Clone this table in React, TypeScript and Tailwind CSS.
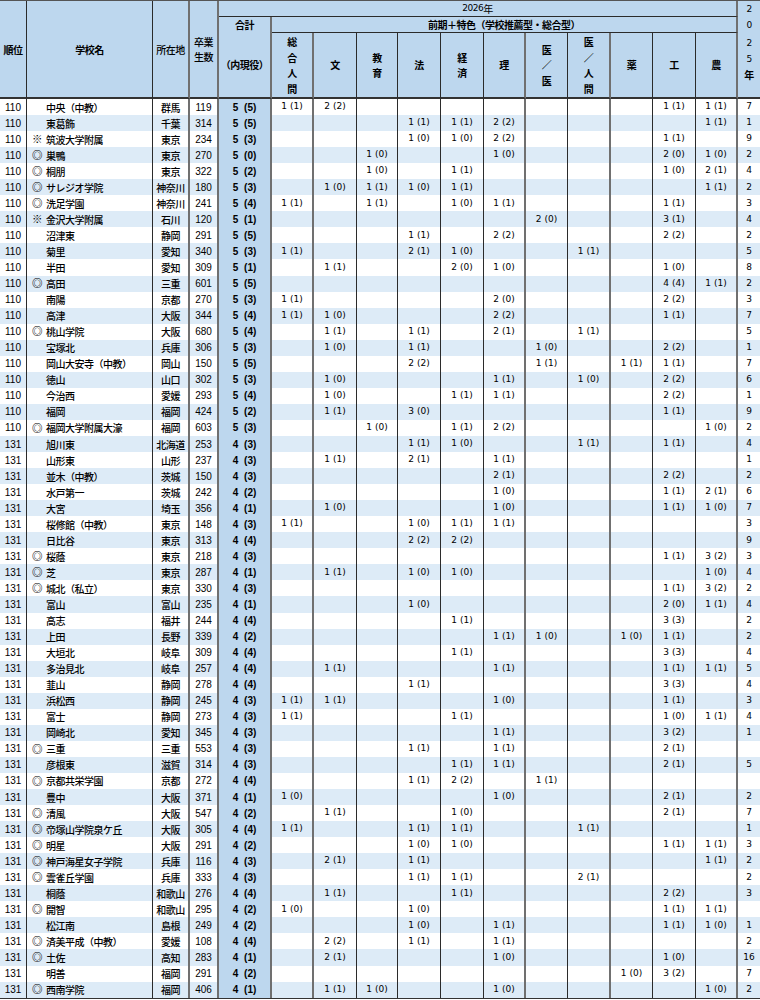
import React from 'react';

// column template shared by header and body rows
const COLS =
  'grid grid-cols-[27px_126px_37px_29px_53px_42px_43px_41px_43px_43px_42px_42px_43px_42px_43px_42px_22px]';

const THIN = 'border-r border-r-[#2b2b2b]';
const THICK = 'border-r-2 border-r-[#707070]';

// right border per column (17 columns)
const RB = [THIN, THIN, THICK, THICK, THICK, THICK, THIN, THIN, THIN, THIN, THICK, THIN, THICK, THIN, THIN, THICK, ''];

const KEYS = ['総', '文', '教', '法', '経', '理', '医', '人', '薬', '工', '農'];

const SUBJECTS: string[][] = [
  ['総', '合', '人', '間'],
  ['文'],
  ['教', '育'],
  ['法'],
  ['経', '済'],
  ['理'],
  ['医', '／', '医'],
  ['医', '／', '人', '間'],
  ['薬'],
  ['工'],
  ['農'],
];

// rank, mark, school, prefecture, graduates, total, per-faculty, 2025
type Row = [string, string, string, string, string, string, string, string];

const rows: Row[] = [
  ['110', '', '中央（中教）', '群馬', '119', '5(5)', '総:1(1) 文:2(2) 工:1(1) 農:1(1)', '7'],
  ['110', '', '東葛飾', '千葉', '314', '5(5)', '法:1(1) 経:1(1) 理:2(2) 農:1(1)', '1'],
  ['110', '※', '筑波大学附属', '東京', '234', '5(3)', '法:1(0) 経:1(0) 理:2(2) 工:1(1)', '9'],
  ['110', '◎', '巣鴨', '東京', '270', '5(0)', '教:1(0) 理:1(0) 工:2(0) 農:1(0)', '2'],
  ['110', '◎', '桐朋', '東京', '322', '5(2)', '教:1(0) 経:1(1) 工:1(0) 農:2(1)', '4'],
  ['110', '◎', 'サレジオ学院', '神奈川', '180', '5(3)', '文:1(0) 教:1(1) 法:1(0) 経:1(1) 農:1(1)', '2'],
  ['110', '◎', '洗足学園', '神奈川', '241', '5(4)', '総:1(1) 教:1(1) 経:1(0) 理:1(1) 工:1(1)', '3'],
  ['110', '※', '金沢大学附属', '石川', '120', '5(1)', '医:2(0) 工:3(1)', '4'],
  ['110', '', '沼津東', '静岡', '291', '5(5)', '法:1(1) 理:2(2) 工:2(2)', '2'],
  ['110', '', '菊里', '愛知', '340', '5(3)', '総:1(1) 法:2(1) 経:1(0) 人:1(1)', '5'],
  ['110', '', '半田', '愛知', '309', '5(1)', '文:1(1) 経:2(0) 理:1(0) 工:1(0)', '8'],
  ['110', '◎', '高田', '三重', '601', '5(5)', '工:4(4) 農:1(1)', '2'],
  ['110', '', '南陽', '京都', '270', '5(3)', '総:1(1) 理:2(0) 工:2(2)', '3'],
  ['110', '', '高津', '大阪', '344', '5(4)', '総:1(1) 文:1(0) 理:2(2) 工:1(1)', '7'],
  ['110', '◎', '桃山学院', '大阪', '680', '5(4)', '文:1(1) 法:1(1) 理:2(1) 人:1(1)', '5'],
  ['110', '', '宝塚北', '兵庫', '306', '5(3)', '文:1(0) 法:1(1) 医:1(0) 工:2(2)', '1'],
  ['110', '', '岡山大安寺（中教）', '岡山', '150', '5(5)', '法:2(2) 医:1(1) 薬:1(1) 工:1(1)', '7'],
  ['110', '', '徳山', '山口', '302', '5(3)', '文:1(0) 理:1(1) 人:1(0) 工:2(2)', '6'],
  ['110', '', '今治西', '愛媛', '293', '5(4)', '文:1(0) 経:1(1) 理:1(1) 工:2(2)', '1'],
  ['110', '', '福岡', '福岡', '424', '5(2)', '文:1(1) 法:3(0) 工:1(1)', '9'],
  ['110', '◎', '福岡大学附属大濠', '福岡', '603', '5(3)', '教:1(0) 経:1(1) 理:2(2) 農:1(0)', '2'],
  ['131', '', '旭川東', '北海道', '253', '4(3)', '法:1(1) 経:1(0) 人:1(1) 工:1(1)', '4'],
  ['131', '', '山形東', '山形', '237', '4(3)', '文:1(1) 法:2(1) 理:1(1)', '1'],
  ['131', '', '並木（中教）', '茨城', '150', '4(3)', '理:2(1) 工:2(2)', '2'],
  ['131', '', '水戸第一', '茨城', '242', '4(2)', '理:1(0) 工:1(1) 農:2(1)', '6'],
  ['131', '', '大宮', '埼玉', '356', '4(1)', '文:1(0) 理:1(0) 工:1(1) 農:1(0)', '7'],
  ['131', '', '桜修館（中教）', '東京', '148', '4(3)', '総:1(1) 法:1(0) 経:1(1) 理:1(1)', '3'],
  ['131', '', '日比谷', '東京', '313', '4(4)', '法:2(2) 経:2(2)', '9'],
  ['131', '◎', '桜蔭', '東京', '218', '4(3)', '工:1(1) 農:3(2)', '3'],
  ['131', '◎', '芝', '東京', '287', '4(1)', '文:1(1) 法:1(0) 経:1(0) 農:1(0)', '4'],
  ['131', '◎', '城北（私立）', '東京', '330', '4(3)', '工:1(1) 農:3(2)', '2'],
  ['131', '', '富山', '富山', '235', '4(1)', '法:1(0) 工:2(0) 農:1(1)', '4'],
  ['131', '', '高志', '福井', '244', '4(4)', '経:1(1) 工:3(3)', '2'],
  ['131', '', '上田', '長野', '339', '4(2)', '理:1(1) 医:1(0) 薬:1(0) 工:1(1)', '2'],
  ['131', '', '大垣北', '岐阜', '309', '4(4)', '経:1(1) 工:3(3)', '4'],
  ['131', '', '多治見北', '岐阜', '257', '4(4)', '文:1(1) 理:1(1) 工:1(1) 農:1(1)', '5'],
  ['131', '', '韮山', '静岡', '278', '4(4)', '法:1(1) 工:3(3)', '4'],
  ['131', '', '浜松西', '静岡', '245', '4(3)', '総:1(1) 文:1(1) 理:1(0) 工:1(1)', '3'],
  ['131', '', '富士', '静岡', '273', '4(3)', '総:1(1) 経:1(1) 工:1(0) 農:1(1)', '4'],
  ['131', '', '岡崎北', '愛知', '345', '4(3)', '理:1(1) 工:3(2)', '1'],
  ['131', '◎', '三重', '三重', '553', '4(3)', '法:1(1) 理:1(1) 工:2(1)', ''],
  ['131', '', '彦根東', '滋賀', '314', '4(3)', '経:1(1) 理:1(1) 工:2(1)', '5'],
  ['131', '◎', '京都共栄学園', '京都', '272', '4(4)', '法:1(1) 経:2(2) 医:1(1)', ''],
  ['131', '', '豊中', '大阪', '371', '4(1)', '総:1(0) 理:1(0) 工:2(1)', '2'],
  ['131', '◎', '清風', '大阪', '547', '4(2)', '文:1(1) 経:1(0) 工:2(1)', '7'],
  ['131', '◎', '帝塚山学院泉ケ丘', '大阪', '305', '4(4)', '総:1(1) 法:1(1) 経:1(1) 人:1(1)', '1'],
  ['131', '◎', '明星', '大阪', '291', '4(2)', '法:1(0) 経:1(0) 工:1(1) 農:1(1)', '3'],
  ['131', '◎', '神戸海星女子学院', '兵庫', '116', '4(3)', '文:2(1) 法:1(1) 農:1(1)', '2'],
  ['131', '◎', '雲雀丘学園', '兵庫', '333', '4(3)', '法:1(1) 経:1(1) 人:2(1)', '2'],
  ['131', '', '桐蔭', '和歌山', '276', '4(4)', '文:1(1) 経:1(1) 工:2(2)', '3'],
  ['131', '◎', '開智', '和歌山', '295', '4(2)', '総:1(0) 法:1(0) 工:1(1) 農:1(1)', ''],
  ['131', '', '松江南', '島根', '249', '4(2)', '法:1(0) 理:1(1) 工:1(1) 農:1(0)', '1'],
  ['131', '◎', '済美平成（中教）', '愛媛', '108', '4(4)', '文:2(2) 法:1(1) 理:1(1)', '2'],
  ['131', '◎', '土佐', '高知', '283', '4(1)', '文:2(1) 理:1(0) 工:1(0)', '16'],
  ['131', '', '明善', '福岡', '291', '4(2)', '薬:1(0) 工:3(2)', '7'],
  ['131', '◎', '西南学院', '福岡', '406', '4(1)', '文:1(1) 教:1(0) 理:1(0) 農:1(0)', '2'],
];

function parseCells(s: string): string[] {
  const out = KEYS.map(() => '');
  s.split(' ').forEach((p) => {
    const [k, v] = p.split(':');
    const i = KEYS.indexOf(k);
    if (i >= 0) out[i] = v.replace('(', ' (');
  });
  return out;
}

function Stack({ chars }: { chars: string[] }) {
  return (
    <div className="flex flex-col items-center">
      {chars.map((c, i) => (
        <div key={i} className="leading-[15.5px]">
          {c}
        </div>
      ))}
    </div>
  );
}

function Header() {
  const hd = 'bg-[#bdd7ee] flex items-center justify-center';
  return (
    <div className={`${COLS} grid-rows-[16px_16px_66px] border-t border-t-[#555]`}>
      <div className={`${hd} col-start-1 row-start-1 row-span-3 ${RB[0]} border-b-2 border-b-[#333] font-bold`}>順位</div>
      <div className={`${hd} col-start-2 row-start-1 row-span-3 ${RB[1]} border-b-2 border-b-[#333] font-bold`}>学校名</div>
      <div className={`${hd} col-start-3 row-start-1 row-span-3 ${RB[2]} border-b-2 border-b-[#333] font-medium`}>所在地</div>
      <div className={`${hd} col-start-4 row-start-1 row-span-3 ${RB[3]} border-b-2 border-b-[#333] flex-col leading-[15px] font-medium`}>
        <div>卒業</div>
        <div>生数</div>
      </div>
      <div className={`${hd} col-start-5 col-span-12 row-start-1 border-b border-b-[#2b2b2b] ${THICK} font-['DejaVu_Sans','Noto_Sans_CJK_JP',sans-serif] text-[9px]`}>
        2026<span className="font-['Noto_Sans_CJK_JP'] text-[10px]">年</span>
      </div>
      <div className={`bg-[#bdd7ee] col-start-17 row-start-1 row-span-3 border-b-2 border-b-[#333] flex flex-col items-center font-['DejaVu_Sans','Noto_Sans_CJK_JP',sans-serif] text-[9px]`}>
        <div className="leading-[16px]">2</div>
        <div className="leading-[16px]">0</div>
        <div className="leading-[16px] mt-[2px]">2</div>
        <div className="leading-[16px]">5</div>
        <div className="leading-[16px] font-['Noto_Sans_CJK_JP'] text-[10px] font-bold">年</div>
      </div>
      <div className={`bg-[#bdd7ee] col-start-5 row-start-2 row-span-2 ${RB[4]} border-b-2 border-b-[#333] flex flex-col items-center font-bold`}>
        <div className="leading-[16px]">合計</div>
        <div className="leading-[16px] mt-[24px]">（内現役）</div>
      </div>
      <div className={`${hd} col-start-6 col-span-11 row-start-2 border-b border-b-[#2b2b2b] ${THICK} font-bold`}>
        前期＋特色（学校推薦型・総合型）
      </div>
      {SUBJECTS.map((chars, i) => (
        <div
          key={i}
          className={`${hd} row-start-3 ${RB[i + 5]} border-b-2 border-b-[#333] font-bold`}
          style={{ gridColumnStart: i + 6 }}
        >
          <Stack chars={chars} />
        </div>
      ))}
    </div>
  );
}

export default function App() {
  return (
    <div className="w-[760px] bg-white text-black font-['Noto_Sans_CJK_JP',sans-serif] text-[10px] tracking-[-0.5px]">
      <Header />
      <div className="border-b border-b-[#333]">
        {rows.map((r, i) => {
          const [rank, mark, name, pref, grads, total, cells, prev] = r;
          const vals = parseCells(cells);
          const num = "flex items-center justify-center font-['DejaVu_Sans',sans-serif] text-[9px] tracking-normal";
          return (
            <div key={i} className={`${COLS} h-[16.05px] ${i % 2 ? 'bg-[#ddebf7]' : 'bg-white'}`}>
              <div className={`flex items-center justify-center font-['Liberation_Sans',sans-serif] text-[10px] tracking-normal ${RB[0]}`}>
                {rank}
              </div>
              <div className={`flex items-center pl-[5px] font-medium ${RB[1]}`}>
                <span className="w-[14px] shrink-0 text-[10.5px] font-bold leading-none">{mark}</span>
                <span className="whitespace-nowrap">{name}</span>
              </div>
              <div className={`flex items-center justify-center whitespace-nowrap font-medium ${RB[2]}`}>{pref}</div>
              <div className={`flex items-center justify-center font-['Liberation_Sans',sans-serif] text-[10px] tracking-normal ${RB[3]}`}>
                {grads}
              </div>
              <div className={`flex items-center justify-center bg-[#bdd7ee] font-['Liberation_Sans',sans-serif] font-bold text-[10px] tracking-normal [word-spacing:3px] ${RB[4]}`}>
                {total.replace('(', ' (')}
              </div>
              {vals.map((v, j) => (
                <div key={j} className={`${num} ${RB[j + 5]}`}>
                  {v}
                </div>
              ))}
              <div className={num}>{prev}</div>
            </div>
          );
        })}
      </div>
    </div>
  );
}
